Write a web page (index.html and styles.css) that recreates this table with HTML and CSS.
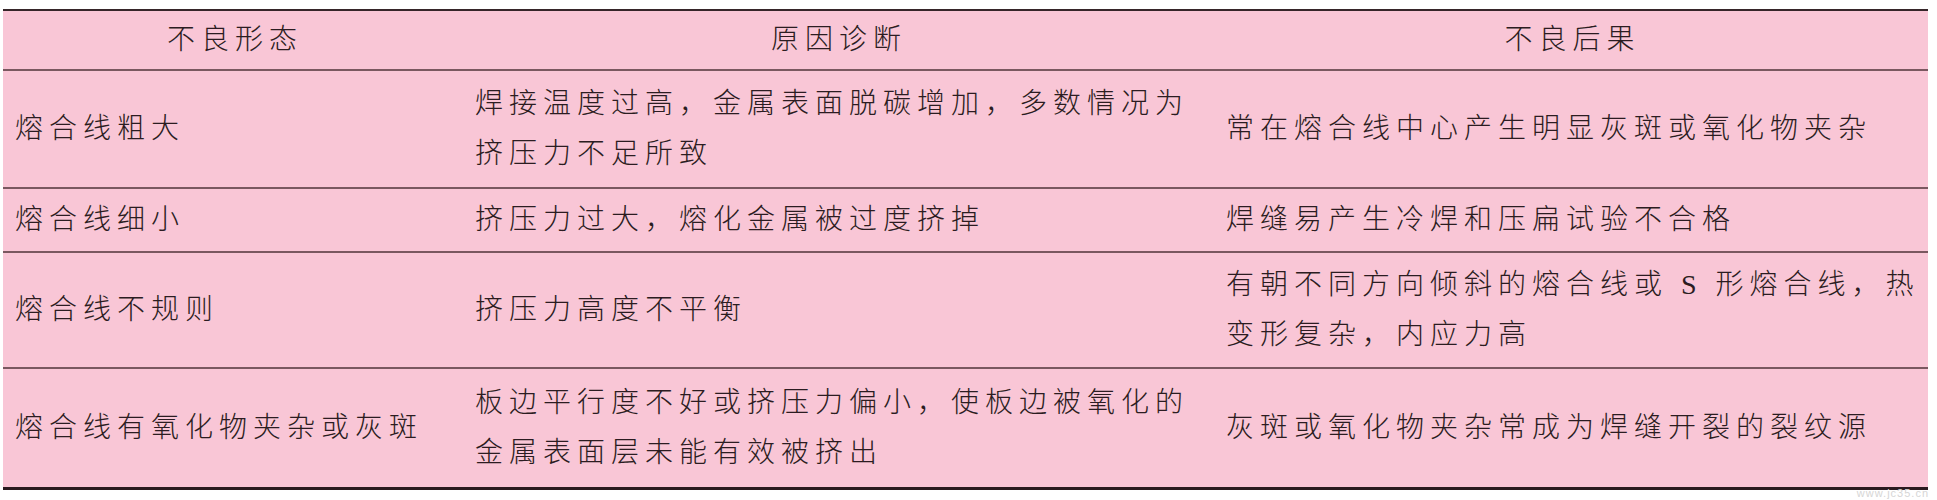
FILE: index.html
```html
<!DOCTYPE html>
<html lang="zh-CN">
<head>
<meta charset="utf-8">
<title>熔合线不良形态</title>
<link rel="stylesheet" href="styles.css">
</head>
<body>
<div class="sheet">
  <div class="grid">
    <div class="row head">
      <div class="cell center">不良形态</div>
      <div class="cell center">原因诊断</div>
      <div class="cell center">不良后果</div>
    </div>
    <div class="row r1">
      <div class="cell">熔合线粗大</div>
      <div class="cell">焊接温度过高，金属表面脱碳增加，多数情况为<br>挤压力不足所致</div>
      <div class="cell">常在熔合线中心产生明显灰斑或氧化物夹杂</div>
    </div>
    <div class="row r2">
      <div class="cell">熔合线细小</div>
      <div class="cell">挤压力过大，熔化金属被过度挤掉</div>
      <div class="cell">焊缝易产生冷焊和压扁试验不合格</div>
    </div>
    <div class="row r3">
      <div class="cell">熔合线不规则</div>
      <div class="cell">挤压力高度不平衡</div>
      <div class="cell">有朝不同方向倾斜的熔合线或 S 形熔合线，热<br>变形复杂，内应力高</div>
    </div>
    <div class="row r4 last">
      <div class="cell">熔合线有氧化物夹杂或灰斑</div>
      <div class="cell">板边平行度不好或挤压力偏小，使板边被氧化的<br>金属表面层未能有效被挤出</div>
      <div class="cell">灰斑或氧化物夹杂常成为焊缝开裂的裂纹源</div>
    </div>
  </div>
  <div class="mark">www.jc35.cn</div>
</div>
</body>
</html>
```
FILE: styles.css
```css
html, body {
  margin: 0;
  padding: 0;
  background: #ffffff;
}

.sheet {
  position: relative;
  width: 1937px;
  height: 500px;
  padding-top: 9px;
  padding-left: 3px;
  box-sizing: border-box;
}

.grid {
  width: 1925px;
  background: #f9c6d6;
  border-top: 2px solid #362529;
  border-bottom: 3px solid #2a1a1f;
  font-family: "Liberation Serif", "Noto Sans CJK SC", serif;
  font-weight: 300;
  font-size: 28px;
  letter-spacing: 6px;
  color: #2b1c21;
}

.row {
  display: grid;
  grid-template-columns: 458px 750px 1fr;
  align-items: center;
  border-bottom: 2px solid #7a5860;
}

.row.last {
  border-bottom: none;
}

.head { height: 58px; }
.r1 { height: 116px; }
.r2 { height: 62px; }
.r3 { height: 114px; }
.r4 { height: 118px; }

.cell {
  white-space: nowrap;
  line-height: 50px;
  padding-left: 12px;
}

.row .cell:nth-child(2) { padding-left: 14px; }
.row .cell:nth-child(3) { padding-left: 15px; }

.row .cell.center {
  text-align: center;
  padding-left: 6px;
}

.mark {
  position: absolute;
  right: 8px;
  top: 487px;
  font-family: "Liberation Sans", sans-serif;
  font-size: 11px;
  letter-spacing: 1px;
  color: #d6d6d6;
}
```
